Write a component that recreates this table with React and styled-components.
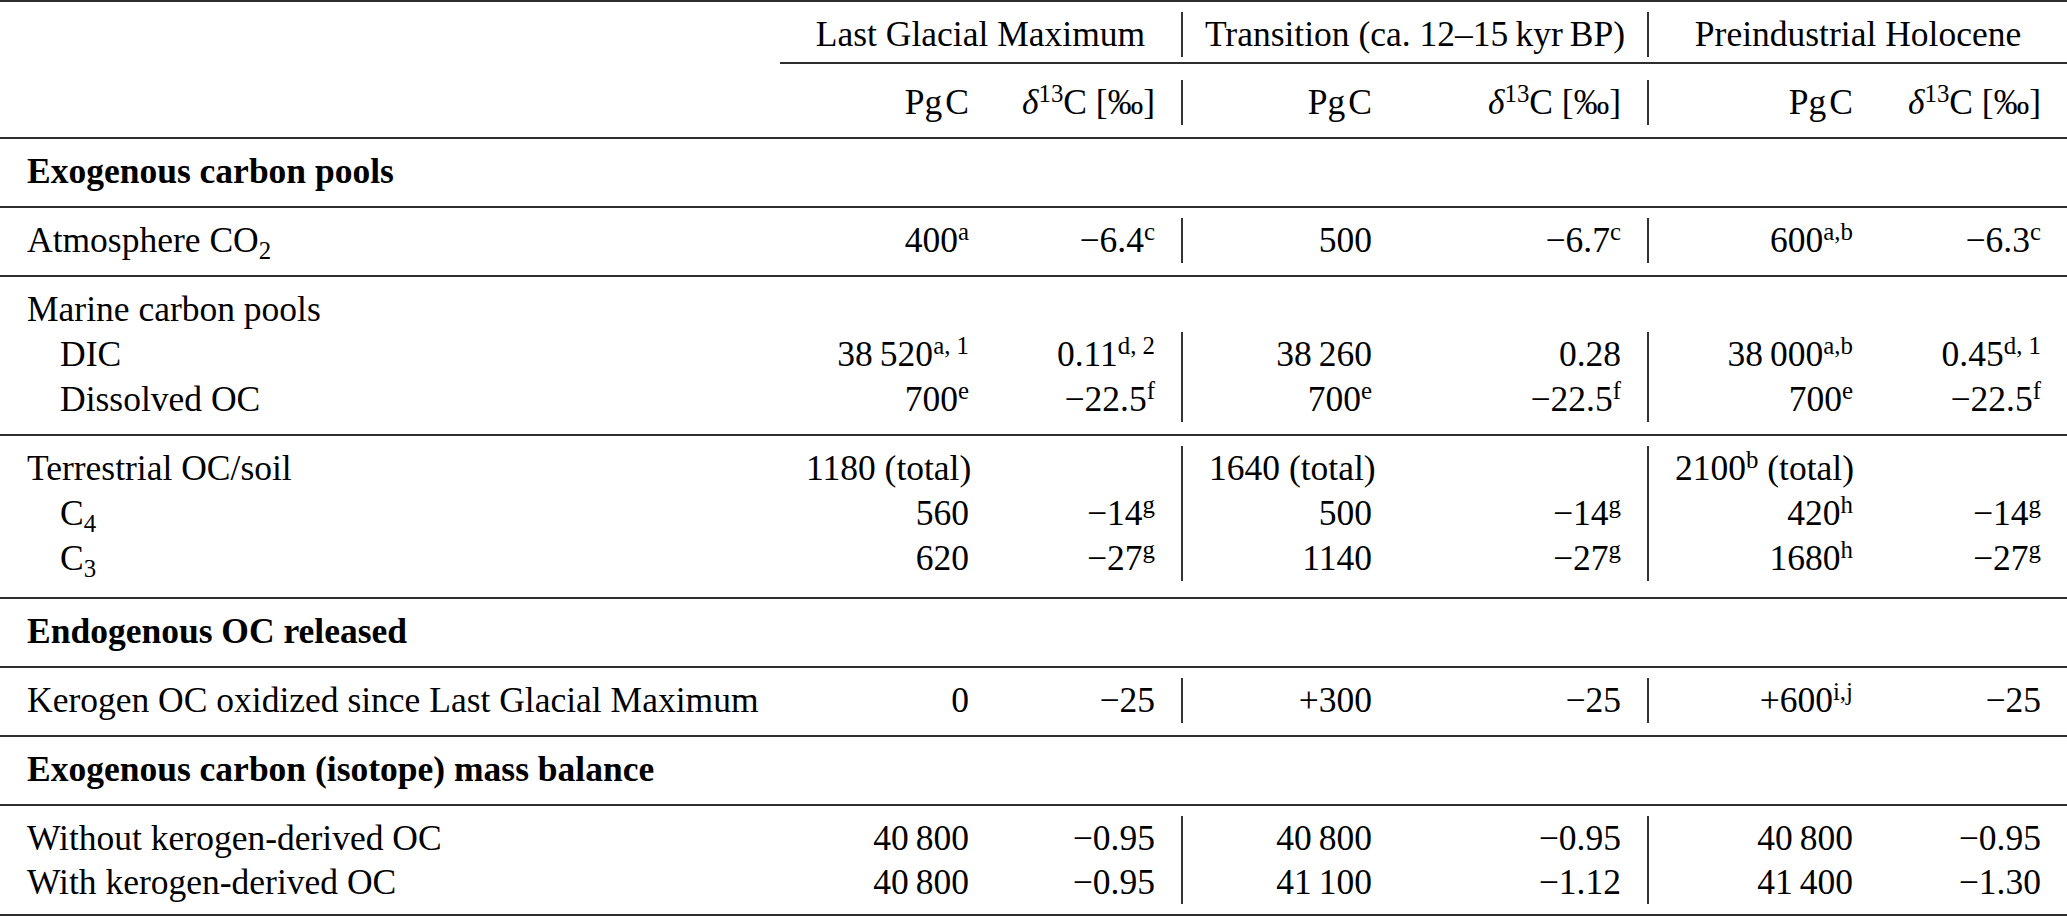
import React from 'react';
import styled, { createGlobalStyle } from 'styled-components';

const GlobalStyle = createGlobalStyle`
  html, body {
    margin: 0;
    padding: 0;
    background: #ffffff;
    overflow: hidden;
  }
  body {
    font-family: "Liberation Serif", "Times New Roman", serif;
    color: #000000;
  }
`;

const COLS = '780px 215px 186px 217px 249px 232px 188px';
const RULE = '2px solid #2e2e2e';
const BAR = '2px solid #333333';

const Table = styled.div`
  width: 2067px;
  border-top: ${RULE};
  font-size: 35.5px;
`;

const Block = styled.div`
  --line: ${(p) => p.$line || 45}px;
  display: grid;
  grid-template-columns: ${COLS};
  padding: 10px 0 ${(p) => p.$pb || 12}px;
  border-bottom: ${RULE};
`;

const GroupTitle = styled.div`
  grid-column: span 2;
  height: var(--line);
  line-height: var(--line);
  padding: 0 20px;
  text-align: center;
  white-space: nowrap;
  border-left: ${(p) => (p.$bar ? BAR : 'none')};
`;

const MidRule = styled.div`
  grid-column: 2 / -1;
  margin: 5px 0 16px;
  border-top: ${RULE};
`;

const Label = styled.div`
  height: var(--line);
  line-height: var(--line);
  padding-left: ${(p) => (p.$indent ? 60 : 27)}px;
  font-weight: ${(p) => (p.$bold ? 700 : 400)};
  white-space: nowrap;
`;

const Cell = styled.div`
  height: var(--line);
  line-height: var(--line);
  padding: 0 26px;
  text-align: right;
  white-space: nowrap;
  border-left: ${(p) => (p.$bar ? BAR : 'none')};
`;

const Sup = styled.sup`
  font-size: 0.7em;
  line-height: 0;
  vertical-align: 0.5em;
`;

const Sub = styled.sub`
  font-size: 0.7em;
  line-height: 0;
  vertical-align: -0.28em;
`;

const Greek = styled.span`
  font-style: italic;
`;

const T = '\u2009';
const H = '\u200A';
const M = '\u2212';

const v = (text, sup) => (
  <>
    {text}
    {sup ? <Sup>{sup}</Sup> : null}
  </>
);

const Delta = () => (
  <>
    <Greek>δ</Greek>
    <Sup>13</Sup>C [‰]
  </>
);

const blocks = [
  { lines: [{ label: 'Exogenous carbon pools', bold: true }] },
  {
    lines: [
      {
        label: (
          <>
            Atmosphere CO<Sub>2</Sub>
          </>
        ),
        cells: [v('400', 'a'), v(`${M}6.4`, 'c'), v('500'), v(`${M}6.7`, 'c'), v('600', 'a,b'), v(`${M}6.3`, 'c')],
      },
    ],
  },
  {
    lines: [
      { label: 'Marine carbon pools' },
      {
        label: 'DIC',
        indent: true,
        cells: [v(`38${T}520`, 'a, 1'), v('0.11', 'd, 2'), v(`38${T}260`), v('0.28'), v(`38${T}000`, 'a,b'), v('0.45', 'd, 1')],
      },
      {
        label: 'Dissolved OC',
        indent: true,
        cells: [v('700', 'e'), v(`${M}22.5`, 'f'), v('700', 'e'), v(`${M}22.5`, 'f'), v('700', 'e'), v(`${M}22.5`, 'f')],
      },
    ],
  },
  {
    pb: 16,
    lines: [
      {
        label: 'Terrestrial OC/soil',
        cells: [
          '1180 (total)',
          '',
          '1640 (total)',
          '',
          <>
            2100<Sup>b</Sup> (total)
          </>,
          '',
        ],
      },
      {
        label: (
          <>
            C<Sub>4</Sub>
          </>
        ),
        indent: true,
        cells: [v('560'), v(`${M}14`, 'g'), v('500'), v(`${M}14`, 'g'), v('420', 'h'), v(`${M}14`, 'g')],
      },
      {
        label: (
          <>
            C<Sub>3</Sub>
          </>
        ),
        indent: true,
        cells: [v('620'), v(`${M}27`, 'g'), v('1140'), v(`${M}27`, 'g'), v('1680', 'h'), v(`${M}27`, 'g')],
      },
    ],
  },
  { lines: [{ label: 'Endogenous OC released', bold: true }] },
  {
    lines: [
      {
        label: 'Kerogen OC oxidized since Last Glacial Maximum',
        cells: [v('0'), v(`${M}25`), v('+300'), v(`${M}25`), v('+600', 'i,j'), v(`${M}25`)],
      },
    ],
  },
  { lines: [{ label: 'Exogenous carbon (isotope) mass balance', bold: true }] },
  {
    line: 44,
    pb: 10,
    lines: [
      {
        label: 'Without kerogen-derived OC',
        cells: [v(`40${T}800`), v(`${M}0.95`), v(`40${T}800`), v(`${M}0.95`), v(`40${T}800`), v(`${M}0.95`)],
      },
      {
        label: 'With kerogen-derived OC',
        cells: [v(`40${T}800`), v(`${M}0.95`), v(`41${T}100`), v(`${M}1.12`), v(`41${T}400`), v(`${M}1.30`)],
      },
    ],
  },
];

const Line = ({ line }) => {
  const cells = line.cells || ['', '', '', '', '', ''];
  const bars = Boolean(line.cells);
  return (
    <>
      <Label $bold={line.bold} $indent={line.indent}>
        {line.label}
      </Label>
      {cells.map((c, i) => (
        <Cell key={i} $bar={bars && (i === 2 || i === 4)}>
          {c}
        </Cell>
      ))}
    </>
  );
};

export default function App() {
  return (
    <>
      <GlobalStyle />
      <Table>
        <Block>
          <Label />
          <GroupTitle>Last Glacial Maximum</GroupTitle>
          <GroupTitle $bar>Transition (ca. 12–15{T}kyr{T}BP)</GroupTitle>
          <GroupTitle $bar>Preindustrial Holocene</GroupTitle>
          <MidRule />
          <Label />
          <Cell>Pg{H}C</Cell>
          <Cell>
            <Delta />
          </Cell>
          <Cell $bar>Pg{H}C</Cell>
          <Cell>
            <Delta />
          </Cell>
          <Cell $bar>Pg{H}C</Cell>
          <Cell>
            <Delta />
          </Cell>
        </Block>
        {blocks.map((b, bi) => (
          <Block key={bi} $line={b.line} $pb={b.pb}>
            {b.lines.map((line, li) => (
              <Line key={li} line={line} />
            ))}
          </Block>
        ))}
      </Table>
    </>
  );
}
